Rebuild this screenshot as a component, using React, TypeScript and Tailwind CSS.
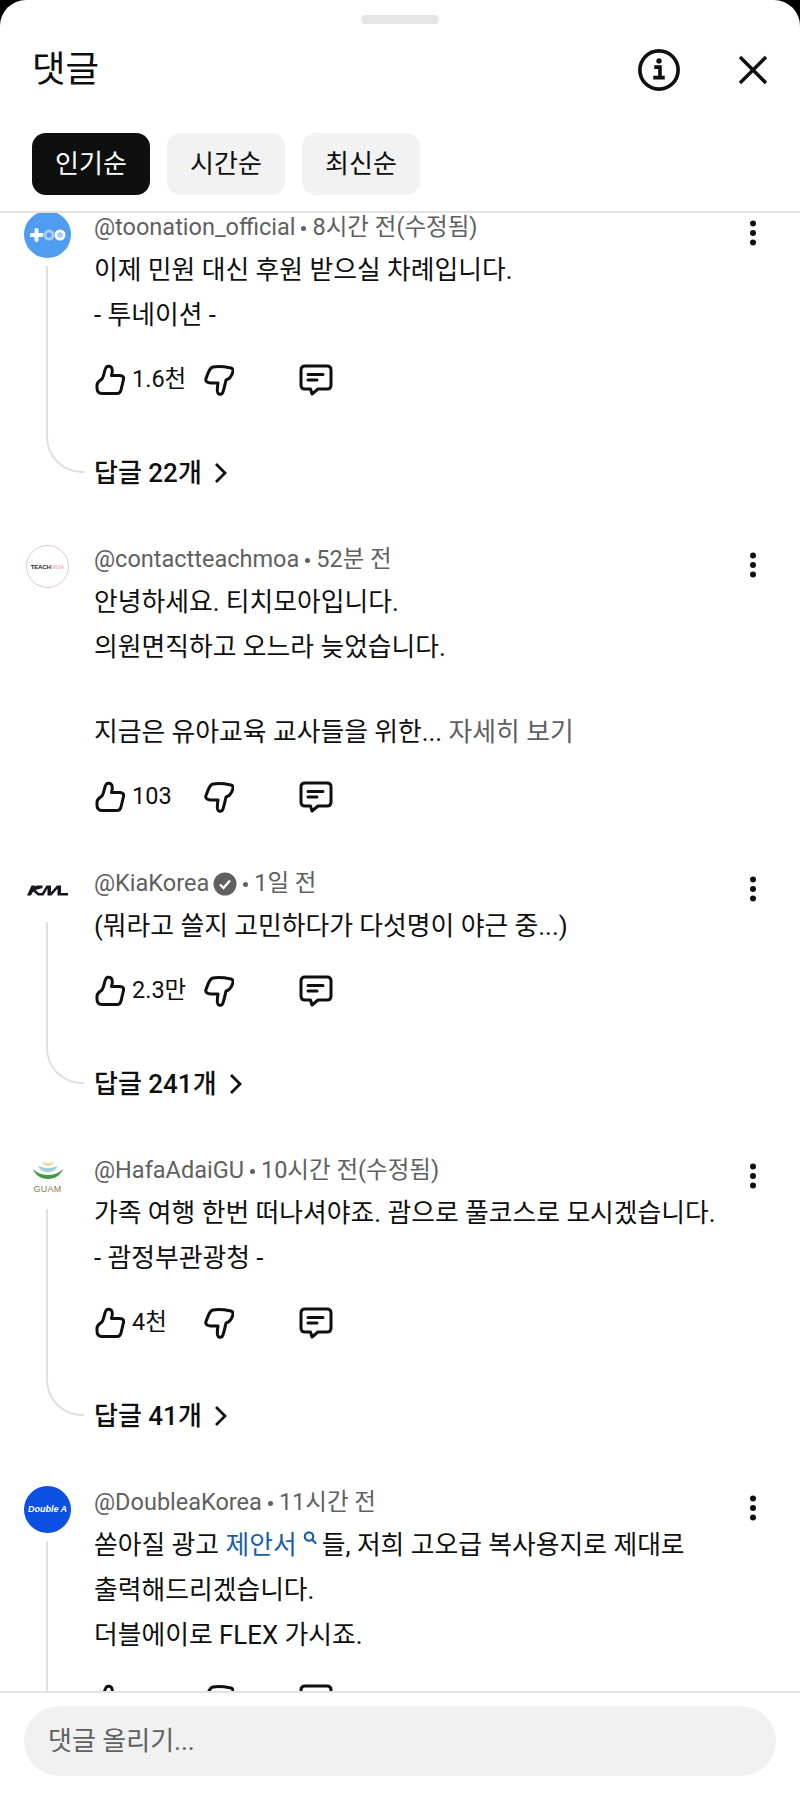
import type { ReactNode } from "react";

const Like = () => (
  <svg width="30" height="32" viewBox="0 0 30 32" fill="none" stroke="#0f0f0f" strokeWidth="3" strokeLinejoin="round" strokeLinecap="round">
    <path d="M2 21C2 18 5 16.500 7 15 9 12 9 8 10.500 4.500 11.500 2 14 1.500 16 3 18.500 5 17 9 16.500 11.500L25 11.500C28 11.500 29 13.500 28.500 15.500L26 26C25.500 28.500 24 29.500 22 29.500L7 29.500C3.500 29.500 2 27 2 24Z" />
  </svg>
);

const Dislike = () => (
  <svg width="30" height="32" viewBox="0 0 30 32" fill="none" stroke="#0f0f0f" strokeWidth="3" strokeLinejoin="round" strokeLinecap="round">
    <path d="M9 3C14 2 22 3 27 4 29 4.500 29.500 6.500 28.500 9 27.500 12 26 15 22 16 21 20 20 26 18.500 29 17.500 31 14 30.500 13.500 28 13 25 13.500 22 14 19L7 19C3 19 1 17 2 14.500 3 12 4 9 5 7 6 5 7 3.500 9 3Z" />
  </svg>
);

const Reply = () => (
  <svg width="34" height="32" viewBox="0 0 34 32" fill="none" stroke="#0f0f0f" strokeWidth="3" strokeLinejoin="round" strokeLinecap="round">
    <path d="M6 2h22c2.500 0 4 1.500 4 4v15c0 2.500-1.500 4-4 4H19l-6 5-1.500-5H6c-2.500 0-4-1.500-4-4V6c0-2.500 1.500-4 4-4Z" />
    <path d="M9 10.500h15M9 16h9" />
  </svg>
);

const Kebab = () => (
  <svg width="8" height="26" viewBox="0 0 8 26" fill="#0f0f0f" className="shrink-0 mt-[7px]">
    <circle cx="4" cy="3.500" r="3" />
    <circle cx="4" cy="13" r="3" />
    <circle cx="4" cy="22.500" r="3" />
  </svg>
);

const TooAvatar = () => (
  <div className="w-[47px] h-[47px] rounded-full bg-[#4f9cf0] flex items-center justify-center">
    <svg width="36" height="14" viewBox="0 0 36 14" fill="none">
      <path d="M1.500 7h10M6.500 2v10" stroke="#fff" strokeWidth="4" strokeLinecap="round" />
      <circle cx="19" cy="7" r="4" stroke="#a8cdf7" strokeWidth="3" />
      <circle cx="30" cy="7" r="4" stroke="#fff" strokeWidth="3" />
      <circle cx="30" cy="7" r="2.500" fill="#a9cbf2" />
    </svg>
  </div>
);

const TeachAvatar = () => (
  <div className="w-[43px] h-[43px] mx-[2px] mt-[2px] rounded-full border border-[#e6c3d2] flex items-center justify-center">
    <span className="text-[6px] leading-none font-bold tracking-tight text-[#222] font-['Liberation_Sans',sans-serif]">
      TEACH<span className="text-[#eeb4cd]">MOA</span>
    </span>
  </div>
);

const KiaAvatar = () => (
  <div className="w-[47px] h-[47px] flex items-center justify-center">
    <svg width="41" height="11" viewBox="0 0 41 11" fill="#17161a">
      <path d="M0 10.500H3.800L6.200 6.600 11 10.500H16.500L20.500 3.400V10.500H24.500L30.500 3.800V10.500H41V8H34V.5H30L24 7.200V.5H19.500L15 8H12L8.500 5 15.500 3V.5H10L7.500 1.500 8 .5H4.500Z" />
    </svg>
  </div>
);

const GuamAvatar = () => (
  <div className="w-[47px] h-[47px] flex flex-col items-center justify-center">
    <svg width="32" height="19" viewBox="0 0 32 19" fill="none">
      <path d="M10 1Q16 3 22 1 20 5 16 5 12 5 10 1Z" fill="#e8dc9a" />
      <path d="M6 5Q16 9 26 5 23 11 16 11 9 11 6 5Z" fill="#9fd0dc" />
      <path d="M1 8C5 12 10 14 16 14 22 14 27 12 31 8 29 14 23 18 16 18 9 18 3 14 1 8Z" fill="#3f9a3c" />
    </svg>
    <span className="text-[9px] leading-[10px] tracking-wide text-[#8a7a4e] mt-[4px] font-['Liberation_Sans',sans-serif]">GUAM</span>
  </div>
);

const DoubleAvatar = () => (
  <div className="w-[47px] h-[47px] rounded-full bg-[#0b50e2] flex items-center justify-center">
    <span className="text-[9px] leading-none font-bold italic text-white font-['Liberation_Sans',sans-serif] whitespace-nowrap">Double A</span>
  </div>
);

type CommentData = {
  avatar: ReactNode;
  handle: string;
  verified?: boolean;
  time: string;
  body: ReactNode[];
  likes?: string;
  replies?: number;
  thread?: boolean;
};

const comments: CommentData[] = [
  {
    avatar: <TooAvatar />,
    handle: "@toonation_official",
    time: "8시간 전(수정됨)",
    body: ["이제 민원 대신 후원 받으실 차례입니다.", "- 투네이션 -"],
    likes: "1.6천",
    replies: 22,
    thread: true,
  },
  {
    avatar: <TeachAvatar />,
    handle: "@contactteachmoa",
    time: "52분 전",
    body: [
      "안녕하세요. 티치모아입니다.",
      "의원면직하고 오느라 늦었습니다.",
      <div className="h-[40px]" />,
      <>
        지금은 유아교육 교사들을 위한... <span className="text-[#606060]">자세히 보기</span>
      </>,
    ],
    likes: "103",
  },
  {
    avatar: <KiaAvatar />,
    handle: "@KiaKorea",
    verified: true,
    time: "1일 전",
    body: ["(뭐라고 쓸지 고민하다가 다섯명이 야근 중...)"],
    likes: "2.3만",
    replies: 241,
    thread: true,
  },
  {
    avatar: <GuamAvatar />,
    handle: "@HafaAdaiGU",
    time: "10시간 전(수정됨)",
    body: ["가족 여행 한번 떠나셔야죠. 괌으로 풀코스로 모시겠습니다.", "- 괌정부관광청 -"],
    likes: "4천",
    replies: 41,
    thread: true,
  },
  {
    avatar: <DoubleAvatar />,
    handle: "@DoubleaKorea",
    time: "11시간 전",
    body: [
      <>
        쏟아질 광고 <span className="text-[#1a60a8]">제안서</span>
        <svg width="14" height="14" viewBox="0 0 14 14" fill="none" stroke="#1a60a8" strokeWidth="2.200" strokeLinecap="round" className="inline-block align-top mt-[8px] ml-[6px] mr-[5px]">
          <circle cx="6" cy="5.500" r="4.200" />
          <path d="m9.500 9 3 3" />
        </svg>
        들, 저희 고오급 복사용지로 제대로
      </>,
      "출력해드리겠습니다.",
      "더블에이로 FLEX 가시죠.",
    ],
    likes: "",
    thread: true,
  },
];

const Comment = ({ c }: { c: CommentData }) => (
  <div className="flex pl-[24px] pr-[43px] pb-[48px] shrink-0">
    <div className="w-[71px] shrink-0 flex flex-col -mt-[2px]">
      {c.avatar}
      {c.thread && (
        c.replies ? (
          <div className="mt-[8px] mb-[24px] ml-[22px] w-[38px] flex-1 border-l-2 border-b-2 border-[#e0e0e0] rounded-bl-[36px]" />
        ) : (
          <div className="mt-[8px] ml-[22px] w-[2px] flex-1 bg-[#e0e0e0] -mb-[48px]" />
        )
      )}
    </div>
    <div className="flex-1 min-w-0 -ml-[1px]">
      <div className="flex justify-between">
        <div className="h-[30px] flex items-center gap-[6px] text-[23.5px] text-[#606060] whitespace-nowrap">
          <span className={c.verified ? "-mr-[2px]" : ""}>{c.handle}</span>
          {c.verified && (
            <svg width="24" height="24" viewBox="0 0 24 24" fill="none">
              <circle cx="12" cy="12" r="11.500" fill="#606060" />
              <path d="m7 12.500 3.500 3.500 6.500-7.500" stroke="#fff" strokeWidth="2.400" />
            </svg>
          )}
          <span className="w-[5px] h-[5px] rounded-full bg-[#606060]" />
          <span>{c.time}</span>
        </div>
        <Kebab />
      </div>
      <div className="mt-[2px] text-[25.8px] leading-[45px] text-[#0f0f0f] whitespace-nowrap">
        {c.body.map((line, i) => (
          <div key={i}>{line}</div>
        ))}
      </div>
      <div className="mt-[18px] ml-[1px] h-[48px] flex items-center text-[#0f0f0f]">
        <div className="w-[109px] flex items-center gap-[7px] text-[23.5px]">
          <Like />
          <span>{c.likes}</span>
        </div>
        <div className="w-[95px]">
          <Dislike />
        </div>
        <Reply />
      </div>
      {c.replies && (
        <div className="mt-[45px] h-[48px] flex items-center gap-[12px] text-[26px] font-medium text-[#0f0f0f]">
          <span>답글 {c.replies}개</span>
          <svg width="14" height="22" viewBox="0 0 14 22" fill="none" stroke="#0f0f0f" strokeWidth="2.800">
            <path d="m2 2 9 9-9 9" />
          </svg>
        </div>
      )}
    </div>
  </div>
);

export default function App() {
  return (
    <div className="h-screen bg-black overflow-hidden font-['Roboto','Noto_Sans_CJK_KR',sans-serif]">
      <div className="h-full bg-white rounded-t-[26px] flex flex-col">
        {/* Header */}
        <div className="pt-[15px] border-b-2 border-[#e3e3e3] shrink-0">
          <div className="w-[78px] h-[9px] mx-auto rounded-full bg-[#e5e5e5]" />
          <div className="mt-[16px] h-[60px] flex items-center pl-[32px] pr-[32px]">
            <h1 className="text-[36.5px] font-normal text-[#0f0f0f] flex-1">댓글</h1>
            <svg width="44" height="44" viewBox="0 0 46 46" fill="none" stroke="#0f0f0f">
              <circle cx="23" cy="23" r="20" strokeWidth="3.800" />
              <path d="M18 20h6v11M17 31h12" strokeWidth="3.800" />
              <circle cx="23" cy="13.500" r="2.800" fill="#0f0f0f" stroke="none" />
            </svg>
            <svg width="30" height="30" viewBox="0 0 30 30" fill="none" stroke="#0f0f0f" strokeWidth="3.400" className="ml-[57px]">
              <path d="m2 2 26 26M28 2 2 28" />
            </svg>
          </div>
          <div className="mt-[33px] mb-[16px] flex gap-[17px] pl-[32px]">
            <div className="w-[118px] h-[62px] rounded-[14px] bg-[#0f0f0f] text-white text-[26px] flex items-center justify-center">인기순</div>
            <div className="w-[118px] h-[62px] rounded-[14px] bg-[#f2f2f2] text-[#0f0f0f] text-[26px] flex items-center justify-center">시간순</div>
            <div className="w-[118px] h-[62px] rounded-[14px] bg-[#f2f2f2] text-[#0f0f0f] text-[26px] flex items-center justify-center">최신순</div>
          </div>
        </div>

        {/* Comment list */}
        <div className="flex-1 min-h-0 overflow-hidden flex flex-col">
          {comments.map((c) => (
            <Comment key={c.handle} c={c} />
          ))}
        </div>

        {/* Input */}
        <div className="border-t-2 border-[#e3e3e3] shrink-0 px-[24px] pt-[13px] pb-[17px] bg-white">
          <div className="h-[70px] rounded-full bg-[#f1f1f1] flex items-center pl-[24px] text-[26px] text-[#606060]">
            댓글 올리기...
          </div>
        </div>
      </div>
    </div>
  );
}
